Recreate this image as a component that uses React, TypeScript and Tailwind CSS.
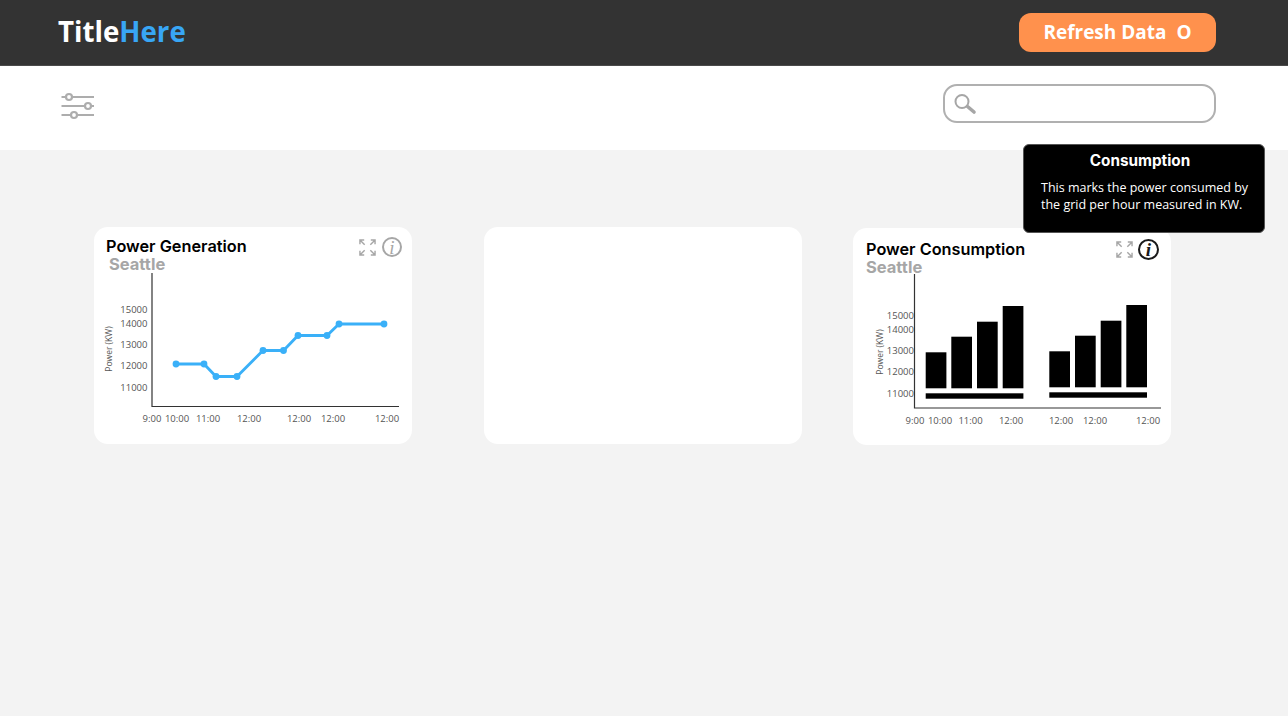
const LINE_POINTS = [
  [176, 364], [204, 364], [216, 376.5], [237, 376.5], [263, 350.5],
  [283.5, 350.5], [298, 335.5], [327, 335.5], [339, 324], [384, 324],
];

const GEN_Y = [[15000, 309], [14000, 323], [13000, 344], [12000, 365], [11000, 387]];
const GEN_X = [['9:00', 152], ['10:00', 177], ['11:00', 208], ['12:00', 249], ['12:00', 299], ['12:00', 333], ['12:00', 387]] as const;

const USE_Y = [[15000, 315.5], [14000, 329.5], [13000, 350.5], [12000, 371.5], [11000, 393]];
const USE_X = [['9:00', 915], ['10:00', 940], ['11:00', 970.5], ['12:00', 1011], ['12:00', 1061], ['12:00', 1095], ['12:00', 1148]] as const;

const BAR_GROUPS = [
  { bottom: 388.3, strip: 393.3, x: [925.7, 951.3, 977, 1002.7], top: [352.3, 336.7, 321.7, 306] },
  { bottom: 387.3, strip: 392.3, x: [1049.3, 1075, 1100.7, 1126.3], top: [351.3, 335.7, 320.7, 305] },
];

const SlidersIcon = () => (
  <svg width="36" height="28" viewBox="0 0 36 28" fill="none" stroke="#adadad" strokeWidth="2.200">
    <path d="M1.500 5h4M12.500 5h21.500M1.500 14h23M31.500 14h2.500M1.500 23h9M17.500 23h16.500" />
    <circle cx="9" cy="5" r="3" />
    <circle cx="28" cy="14" r="3" />
    <circle cx="14" cy="23" r="3" />
  </svg>
);

const SearchIcon = () => (
  <svg width="24" height="24" viewBox="0 0 24 24" fill="none" stroke="#a6a6a6">
    <circle cx="8" cy="9.500" r="6.500" strokeWidth="2" />
    <path d="M13.500 14.500l6.500 5.500" strokeWidth="3.600" strokeLinecap="round" />
  </svg>
);

const ExpandIcon = () => (
  <svg width="17" height="17" viewBox="0 0 18 18" fill="none" stroke="#a6a6a6" strokeWidth="1.500">
    <path d="M1 5.500V1h4.500M1 1l5 5M17 5.500V1h-4.500M17 1l-5 5M1 12.500V17h4.500M1 17l5-5M17 12.500V17h-4.500M17 17l-5-5" />
  </svg>
);

const InfoIcon = ({ dark }: { dark?: boolean }) => (
  <div
    className={`flex items-center justify-center rounded-full border-2 font-['Liberation_Serif',serif] italic leading-none ${
      dark ? 'h-[21px] w-[21px] border-[#1a1a1a] text-[19px] font-bold text-[#1a1a1a]' : 'h-5 w-5 border-[#a6a6a6] text-[19px] text-[#a6a6a6]'
    }`}
  >
    i
  </div>
);

const AxisText = ({ x, y, children, anchor = 'middle' }: { x: number; y: number; children: React.ReactNode; anchor?: 'middle' | 'end' }) => (
  <text x={x} y={y} textAnchor={anchor} dominantBaseline="central" fontSize="9.500" fontFamily="'Open Sans', sans-serif" fill="#555">
    {children}
  </text>
);

const GenerationChart = () => (
  <svg width="318" height="172" viewBox="94 272 318 172" className="block">
    <path d="M152 273V406.500H399" fill="none" stroke="#333" strokeWidth="1.200" />
    <text x="0" y="0" transform="translate(108.500 349) rotate(-90)" textAnchor="middle" dominantBaseline="central" fontSize="8.500" fontFamily="'Open Sans', sans-serif" fill="#555">Power (KW)</text>
    {GEN_Y.map(([label, y]) => <AxisText key={label} x={147.5} y={y} anchor="end">{label}</AxisText>)}
    {GEN_X.map(([label, x]) => <AxisText key={x} x={x} y={418}>{label}</AxisText>)}
    <polyline points={LINE_POINTS.map((p) => p.join(',')).join(' ')} fill="none" stroke="#3ab0f8" strokeWidth="2.800" />
    {LINE_POINTS.map(([x, y]) => <circle key={x} cx={x} cy={y} r="3.400" fill="#3ab0f8" />)}
  </svg>
);

const ConsumptionChart = () => (
  <svg width="318" height="172" viewBox="853 273 318 172" className="block">
    <text x="0" y="0" transform="translate(879 352) rotate(-90)" textAnchor="middle" dominantBaseline="central" fontSize="8.500" fontFamily="'Open Sans', sans-serif" fill="#555">Power (KW)</text>
    {USE_Y.map(([label, y]) => <AxisText key={label} x={914} y={y} anchor="end">{label}</AxisText>)}
    {USE_X.map(([label, x]) => <AxisText key={x} x={x} y={420}>{label}</AxisText>)}
    <path d="M914.500 274V408H1161" fill="none" stroke="#333" strokeWidth="1.200" />
    {BAR_GROUPS.map((g) => (
      <g key={g.bottom}>
        {g.x.map((x, i) => <rect key={x} x={x} y={g.top[i]} width="20.700" height={g.bottom - g.top[i]} fill="#000" />)}
        <rect x={g.x[0]} y={g.strip} width={g.x[3] + 20.7 - g.x[0]} height="5.400" fill="#000" />
      </g>
    ))}
  </svg>
);

export default function App() {
  return (
    <div className="relative min-h-[716px] bg-[#f3f3f3] font-['Open_Sans',sans-serif]">
      <header className="flex h-[66px] items-center justify-between border-b border-[#4a4a4a] bg-[#333333] pl-[58px] pr-[72px]">
        <h1 className="pb-[2px] text-[27.700px] font-bold leading-none text-white">
          Title<span className="text-[#38a6f5]">Here</span>
        </h1>
        <button className="flex h-[39px] w-[197px] items-center justify-center gap-[10px] rounded-[12px] bg-[#ff914d] text-[19px] font-bold text-white">
          <span>Refresh Data</span>
          <span>O</span>
        </button>
      </header>

      <div className="flex h-[84px] items-start justify-between bg-white pl-[60px] pr-[72px]">
        <div className="pt-[26px]">
          <SlidersIcon />
        </div>
        <div className="mt-[18px] flex h-[39px] w-[273px] items-center rounded-[14px] border-2 border-[#b0b0b0] pl-[9px]">
          <SearchIcon />
        </div>
      </div>

      <div className="absolute left-[1023px] top-[144px] z-10 h-[89px] w-[242px] rounded-[6px] border border-[#555] bg-black pl-[17px] pt-[6px] text-white">
        <div className="pr-[25px] text-center font-['Inter',sans-serif] text-[15.300px] font-bold leading-[20px]">Consumption</div>
        <p className="mt-[8px] whitespace-nowrap text-[12.500px] leading-[17px]">
          This marks the power consumed by
          <br />
          the grid per hour measured in KW.
        </p>
      </div>

      <main className="flex items-start pl-[94px] pt-[77px]">
        <section className="h-[217px] w-[318px] rounded-[14px] bg-white">
          <div className="flex h-[45px] justify-between pl-[12px] pr-[10px] pt-[10px] font-['Inter',sans-serif]">
            <div>
              <div className="text-[16.300px] font-semibold leading-[19px] text-black">Power Generation</div>
              <div className="pl-[3px] text-[16.500px] font-bold leading-[16px] text-[#a6a6a6]">Seattle</div>
            </div>
            <div className="flex h-5 items-center gap-[6px]">
              <ExpandIcon />
              <InfoIcon />
            </div>
          </div>
          <GenerationChart />
        </section>

        <section className="ml-[72px] h-[217px] w-[318px] rounded-[14px] bg-white" />

        <section className="ml-[51px] mt-[1px] h-[217px] w-[318px] rounded-[14px] bg-white">
          <div className="flex h-[45px] justify-between pl-[13px] pr-[12px] pt-[12px] font-['Inter',sans-serif]">
            <div>
              <div className="text-[16.300px] font-semibold leading-[19px] text-black">Power Consumption</div>
              <div className="text-[16.500px] font-bold leading-[16px] text-[#a6a6a6]">Seattle</div>
            </div>
            <div className="-mt-[1px] flex h-5 items-center gap-[5px]">
              <ExpandIcon />
              <InfoIcon dark />
            </div>
          </div>
          <ConsumptionChart />
        </section>
      </main>
    </div>
  );
}
